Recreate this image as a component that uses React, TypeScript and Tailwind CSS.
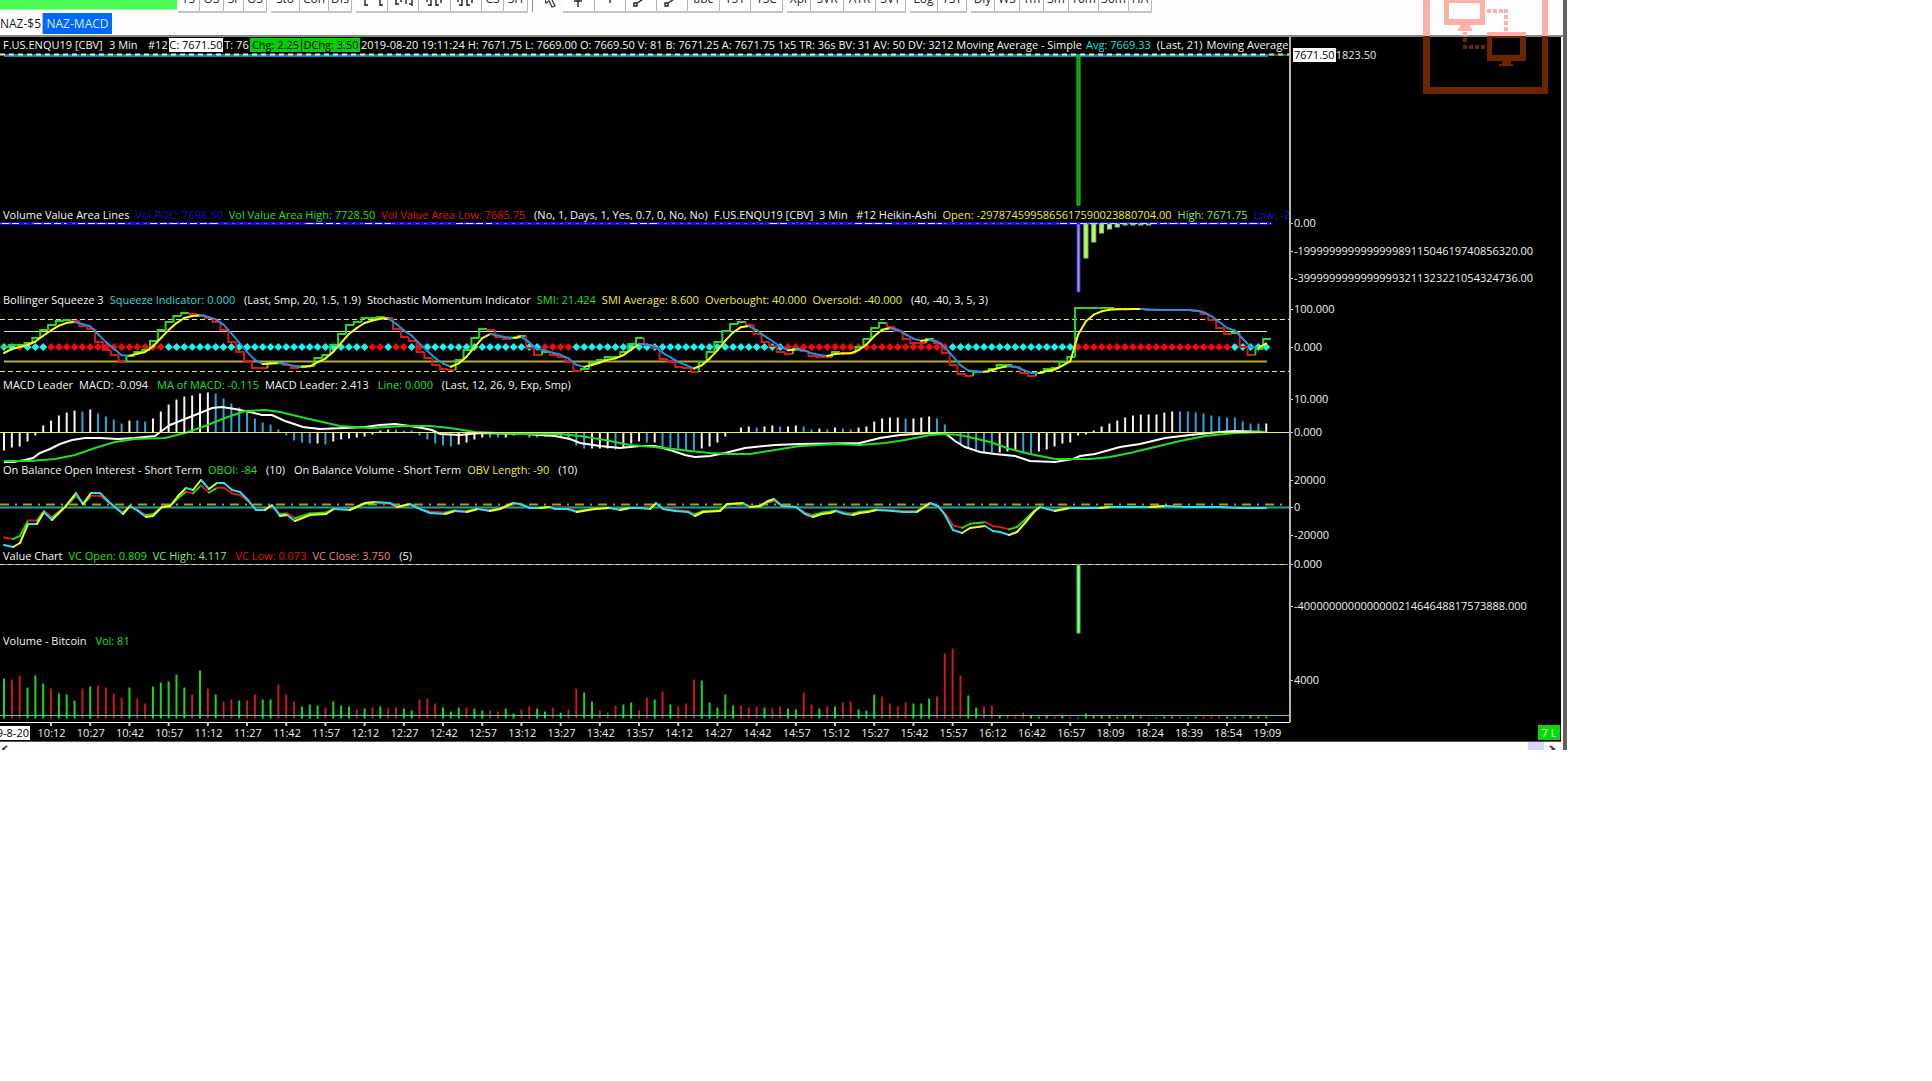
import type { ReactNode } from "react";

type Part = readonly [text: string, tone: string];

const WHITE = "text-neutral-100";
const GREEN = "text-[#22e022]";
const YELLOW = "text-[#eeee30]";

function barX(index: number) {
  return 4 + index * 7.84;
}

/* "g40" is an up bar 40 tall, "r39" a down bar */
const VOLUME =
  "g40 r39 r43 g31 g43 g35 r30 g25 g24 g18 r30 g32 r33 r31 r25 r21 g31 r20 r15 g32 g36 g37 g44 g31 r24 g48 r30 g24 r17 r19 g18 r18 r24 g19 g19 r34 r24 r17 g12 g14 g13 r11 g17 g13 g12 r9 g10 r11 g12 r10 r11 g10 g8 r19 r20 r15 g11 g7 g11 r11 g10 g8 r8 r7 g10 g5 r9 r12 g10 g7 r11 g6 r9 r30 g26 g17 r8 r6 r13 g14 g16 r8 r21 g19 r27 g14 r12 r15 r39 g38 g16 g11 g24 g13 r13 r11 r12 g11 r10 r12 g10 g9 r26 r14 g10 r12 g12 r16 r17 g9 g8 g24 r22 r15 r12 r16 g15 g15 g20 r22 r65 r70 r43 g23 g11 r12 r13 g3 r3 r2 r6 g3 g2 g3 r2 g3 r2 g1 g5 g3 g3 g3 g2 g3 g3 g2 r1 g1 g2 g2 r2 g1 g2 r2 r2 r2 g2 g2 r4 g3 g2 g2".split(" ");

/* "w" bars are rising, "b" bars are fading */
const MACD_BARS =
  "w-18 w-15 w-14 w-9 w-3 w7 w12 w17 w20 w22 b21 w23 b19 b16 b13 b9 w12 b12 b11 w14 w21 w28 w33 w36 w37 w39 w40 b39 b34 b29 b25 b20 b14 b10 b8 b3 b-3 b-8 b-10 b-11 w-11 b-12 w-9 w-7 w-6 w-5 w-4 w-2 w2 w3 b3 b2 b2 b-3 b-7 b-11 b-13 b-14 w-12 w-10 w-7 w-5 b-5 b-5 w-5 w-3 b-2 b-5 b-5 w-4 b-4 b-5 b-7 b-13 b-16 w-16 w-16 w-16 b-17 w-15 w-11 w-9 b-10 w-10 b-15 b-15 b-17 b-18 b-18 w-16 w-14 w-10 w-4 w0 w5 w6 b5 w6 w7 b6 w6 w7 b6 b3 w4 b3 w5 b4 b3 w5 w6 w11 w14 w15 w15 b14 w14 w15 w16 b14 b8 b-1 b-12 b-16 b-18 b-20 b-20 w-20 w-19 w-18 b-21 b-21 w-19 w-17 w-14 w-11 w-10 w-3 w-2 w2 w6 w9 w12 w15 w17 w18 w18 w18 w20 w21 b21 b21 b20 b19 b17 b16 b15 b15 b11 b9 b9 w9".split(" ");

const SMI = [
  347, 345, 345, 343, 338, 330, 325, 321, 320, 321, 326, 329, 342, 350, 355, 362, 356, 352, 350, 341,
  330, 322, 316, 313, 314, 315, 318, 322, 330, 342, 352, 361, 368, 368, 363, 363, 365, 368, 367, 366,
  358, 355, 345, 334, 325, 322, 318, 318, 317, 318, 329, 337, 341, 352, 358, 365, 369, 370, 360, 350,
  338, 329, 330, 337, 339, 338, 336, 348, 355, 352, 355, 357, 362, 371, 369, 363, 360, 357, 357, 352,
  344, 338, 345, 348, 359, 362, 367, 368, 372, 362, 352, 342, 331, 324, 322, 325, 334, 342, 346, 352,
  354, 349, 351, 356, 357, 357, 352, 353, 353, 347, 339, 328, 323, 327, 331, 339, 343, 343, 339, 343,
  353, 365, 374, 376, 372, 372, 369, 365, 365, 367, 373, 376, 373, 369, 368, 362, 357, 308, 308, 308,
  308, 308, 309, 309, 309, 309, 310, 310, 310, 310, 310, 310, 311, 314, 320, 328, 334, 333, 347, 355,
  349, 339,
];

const MACD_LINE =
  "4,462 13,462 25,460 33,458 40,453 50,449 60,444 72,440 85,438 100,438 118,439 135,438 155,436 163,430 170,425 185,419 200,413 212,408 222,407 235,409 250,412 262,415 272,415 285,421 303,427 320,429 345,428 365,427 380,425 395,424 410,426 422,428 432,430 440,434 460,435 480,433 525,434 555,436 570,439 580,443 600,446 620,448 640,446 655,446 670,450 685,455 695,457 710,456 725,453 745,448 775,445 800,444 860,443 880,438 900,435 930,433 945,433 955,441 965,447 980,452 995,454 1015,456 1030,461 1055,462 1073,459 1080,456 1095,454 1120,447 1140,444 1165,438 1190,435 1220,432 1235,431 1266,432";

const MACD_AVERAGE =
  "4,461 30,461 55,459 75,455 95,448 115,442 135,439 165,438 185,433 205,426 225,418 245,411 265,410 280,412 305,418 340,426 370,428 405,426 430,426 450,428 475,432 520,434 560,434 580,436 605,440 630,445 665,448 690,451 710,453 730,454 750,454 775,450 800,446 835,444 860,445 885,443 905,440 930,435 945,434 960,435 990,442 1010,449 1030,454 1055,459 1090,459 1110,457 1130,453 1155,447 1180,441 1205,436 1235,433 1266,432";

const OBV: number[][] =
  "4,545 13,547 20,543 28,524 37,524 44,512 52,520 65,507 76,493 83,504 91,493 100,493 108,501 116,508 123,514 130,506 138,511 146,517 153,516 162,507 170,506 178,496 186,488 193,490 201,480 209,489 217,483 224,483 232,490 240,492 248,500 256,510 265,510 272,505 280,516 287,515 295,521 310,515 326,514 334,509 350,510 365,503 375,502 390,503 397,507 410,504 420,509 430,513 445,514 455,511 467,512 478,509 490,511 500,509 513,503 520,504 530,508 540,508 550,507 555,509 568,509 577,512 595,509 610,508 620,510 630,508 640,508 650,509 656,503 663,509 675,511 688,512 695,516 703,512 720,511 727,504 743,503 750,507 760,506 768,501 774,499 782,506 796,507 805,514 813,517 822,514 830,513 836,511 845,514 853,515 860,513 868,512 877,510 893,511 903,512 917,512 930,503 938,506 945,515 953,530 962,533 970,528 985,526 993,531 1000,532 1009,535 1017,532 1025,523 1034,512 1040,507 1055,511 1070,508 1100,508 1110,507 1150,507 1165,506 1185,507 1220,507 1240,508 1266,508"
    .split(" ")
    .map((point) => point.split(",").map(Number));

const OBOI = OBV.map(([x, y]) => [x, 507 + (y - 507) * 0.8]);

const TIME_LABELS =
  "10:12 10:27 10:42 10:57 11:12 11:27 11:42 11:57 12:12 12:27 12:42 12:57 13:12 13:27 13:42 13:57 14:12 14:27 14:42 14:57 15:12 15:27 15:42 15:57 16:12 16:42 16:57 18:09 18:24 18:39 18:54 19:09".split(" ");

/* ---------- toolbar ---------- */

function PriceBars({ d }: { readonly d: string }) {
  return (
    <svg className="h-[13px] w-8 shrink-0" viewBox="0 0 32 13" fill="none" stroke="#222" strokeWidth="1.4">
      <path d={d} />
    </svg>
  );
}

const BARS_A = "M9 0V6 M9 5H12 M24 0V6 M24 5H27";
const BARS_B = "M9 0V5 M9 4H12 M14 0V2 M19 0V4 M25 0V6 M22 4H25";
const BARS_C = "M8 0V2 M12 0V6 M9 5H12 M17 0V6 M17 5H20 M22 0V3";
const CROSS = "M15 0V7 M11 1H19";
const DASH = "M16 0V3";
const LINE_TOOL = "M12 3H9V6H12Z M12 3L17 0";

type Tool = readonly [width: string, label: string, icon?: string];

const TOOL_GROUPS: readonly (readonly Tool[])[] = [
  [["w-[22px]", "YS"], ["w-6", "OS"], ["w-5", "Sr"], ["w-[23px]", "OS"]],
  [["w-[29px]", "Sto"], ["w-[29px]", "Con"], ["w-[23px]", "DIs"]],
  [["w-8", "", BARS_A], ["w-[31px]", "", BARS_B], ["w-8", "", BARS_C], ["w-[31px]", "", BARS_C], ["w-[22px]", "CS"], ["w-6", "SH"]],
];

const DRAW_GROUPS: readonly (readonly Tool[])[] = [
  [["w-8", "", CROSS], ["w-[31px]", "", DASH], ["w-[31px]", "", LINE_TOOL], ["w-[31px]", "", LINE_TOOL], ["w-8", "abc"], ["w-[31px]", "T5T"], ["w-8", "TSC"]],
  [["w-6", "Xpl"], ["w-[33px]", "SVR"], ["w-8", "ATR"], ["w-[30px]", "SVT"]],
  [["w-7", "Log"], ["w-[29px]", "YST"]],
  [["w-6", "Dly"], ["w-[25px]", "WS"], ["w-6", "1m"], ["w-[25px]", "3m"], ["w-[30px]", "10m"], ["w-[30px]", "30m"], ["w-[23px]", "HA"]],
];

function ToolGroup({ tools }: { readonly tools: readonly Tool[] }) {
  return (
    <div className="flex h-[13px] shrink-0 border-b-2 border-[#c6c4be]">
      {tools.map(([width, label, icon], index) => (
        <button
          key={index}
          type="button"
          className={`${width} flex h-[11px] shrink-0 items-end justify-center border-r border-[#b8b6b0] bg-white pb-[6px] text-xs leading-none text-neutral-800`}
        >
          {icon ? <span className="-mb-2 flex"><PriceBars d={icon} /></span> : label}
        </button>
      ))}
    </div>
  );
}

function Toolbar() {
  return (
    <div className="flex h-[13px] gap-1 overflow-hidden">
      <div className="-mr-[3px] h-[10px] w-[177px] shrink-0 border-b border-[#9dff9d] bg-[#4cfc55]" />
      {TOOL_GROUPS.map((tools, index) => (
        <ToolGroup key={index} tools={tools} />
      ))}
      <button type="button" aria-label="Select" className="-mr-1 flex h-3 w-[31px] shrink-0 border-l border-[#8f8d88] pl-3">
        <svg className="h-[9px] w-3" viewBox="0 0 12 9" fill="white" stroke="#333" strokeWidth="1.2">
          <path d="M0 0L1 3L4 1L7 7L10 6L7 0" />
        </svg>
      </button>
      {DRAW_GROUPS.map((tools, index) => (
        <ToolGroup key={index} tools={tools} />
      ))}
    </div>
  );
}

function Tabs() {
  return (
    <div className="flex h-6 items-start border-b-2 border-[#8b8a82] text-xs leading-[21px]">
      <button type="button" className="h-[21px] w-[43px] border-r border-[#b8b6b0] bg-white text-left whitespace-nowrap text-neutral-900">
        NAZ-$5
      </button>
      <button type="button" className="h-[21px] w-[69px] bg-[#0067f8] whitespace-nowrap text-[#d9ecff]">
        NAZ-MACD
      </button>
    </div>
  );
}

/* ---------- panes ---------- */

function Legend({ parts }: { readonly parts: readonly Part[] }) {
  return (
    <div className="flex h-4 items-center gap-[6px] overflow-hidden pl-[3px] whitespace-pre">
      {parts.map(([text, tone], index) => (
        <span key={index} className={`${tone} shrink-0`}>
          {text}
        </span>
      ))}
    </div>
  );
}

function Pane({
  top,
  height,
  size,
  legend,
  ticks,
  children,
}: {
  readonly top: number;
  readonly height: number;
  readonly size: string;
  readonly legend: ReactNode;
  readonly ticks: readonly (readonly [number, string])[];
  readonly children: ReactNode;
}) {
  return (
    <section className={`${size} flex`}>
      <div className="flex min-w-0 flex-1 flex-col">
        {legend}
        <svg
          className="block w-full flex-1 overflow-visible"
          viewBox={`0 ${top + 16} 1289 ${height - 16}`}
          preserveAspectRatio="none"
          fill="none"
        >
          {children}
        </svg>
      </div>
      <svg className="block h-full w-[272px] shrink-0 border-l-2 border-[#b5b5b5]" viewBox={`0 ${top} 270 ${height}`}>
        {ticks.map(([y, label]) => (
          <g key={label}>
            <path d={`M0 ${y}H2`} stroke="#d4d4d4" />
            <text x="3" y={y + 3.5} fill="#f0f0f0">
              {label}
            </text>
          </g>
        ))}
      </svg>
    </section>
  );
}

function TrendLine({
  points,
  up,
  down,
}: {
  readonly points: readonly (readonly number[])[];
  readonly up: string;
  readonly down: string;
}) {
  return (
    <g strokeWidth="2" strokeLinecap="round">
      {points.slice(1).map(([x, y], index) => {
        const [px, py] = points[index];
        return <path key={index} d={`M${px} ${py}L${x} ${y}`} stroke={y < py ? up : down} />;
      })}
    </g>
  );
}

function squeezeTone(index: number) {
  const squeezed =
    index === 2 ||
    (index >= 6 && index <= 20) ||
    [47, 48, 50, 51, 53].includes(index) ||
    (index >= 69 && index <= 72) ||
    (index >= 100 && index <= 120) ||
    (index >= 137 && index <= 156);
  return squeezed ? "#f40808" : "#18f4f4";
}

function SmiPlot() {
  let average = 353;
  const averages = SMI.map((level, index) => {
    average = index === 0 ? average : average + (level - average) / 2;
    return [barX(index), average];
  });
  let stepTone = "#35d635";

  return (
    <>
      <path d="M0 319.5H1290M0 371.5H1290" stroke="#e8e85a" strokeDasharray="5 3" />
      <path d="M4 331.5H1267" stroke="#eded55" />
      <path d="M4 361.5H1267" stroke="#b5aa35" strokeWidth="2" />
      {SMI.map((_, index) => {
        const x = barX(index);
        return <path key={index} d={`M${x - 4} 347L${x} 343L${x + 4} 347L${x} 351Z`} fill={squeezeTone(index)} />;
      })}
      {SMI.map((level, index) => {
        const previous = SMI[Math.max(0, index - 1)];
        if (level < previous) stepTone = "#27d827";
        if (level > previous) stepTone = "#dc1818";
        const x = barX(index) - 3;
        return <path key={index} d={`M${x} ${previous}V${level}H${x + 7.84}`} stroke={stepTone} strokeWidth="2" />;
      })}
      <TrendLine points={averages} up="#fcfc1c" down="#2490e6" />
    </>
  );
}

function TimeAxis() {
  return (
    <div className="flex h-[19px] bg-black">
      <div className="flex min-w-0 flex-1 flex-col">
        <svg className="block h-1 w-full" viewBox="0 0 1290 4" preserveAspectRatio="none">
          <path d="M0 0H1290" stroke="white" strokeWidth="2" />
          {TIME_LABELS.map((time, index) => (
            <path key={time} d={`M${barX(6 + index * 5)} 0V4`} stroke="#d4d4d4" strokeWidth="2" />
          ))}
        </svg>
        <div className="flex h-[14px] items-center text-[#f0f0f0]">
          <span className="mr-[2px] flex h-[14px] w-[30px] shrink-0 items-center justify-end overflow-hidden bg-white pr-px whitespace-nowrap text-black">
            9-8-20
          </span>
          <div className="mr-[3px] flex min-w-0 flex-1">
            {TIME_LABELS.map((time) => (
              <span key={time} className="min-w-0 flex-1 text-center">
                {time}
              </span>
            ))}
          </div>
        </div>
      </div>
      <div className="flex w-[271px] shrink-0 items-end justify-end pr-px pb-px">
        <span className="h-[15px] w-[22px] bg-[#04d904] text-center leading-[15px] text-[#d5ffd5]">7 L</span>
      </div>
    </div>
  );
}

function RemoteLogo() {
  const dots = [
    [64, 9], [70, 9], [76, 9], [81, 9], [81, 15], [81, 21], [81, 27],
    [40, 32], [40, 38], [40, 45], [46, 45], [52, 45], [58, 45],
  ];
  return (
    <svg className="absolute top-0 right-[15px] h-[94px] w-[125px]" viewBox="0 0 125 94">
      <defs>
        <linearGradient id="logo-tone" gradientUnits="userSpaceOnUse" x1="0" y1="0" x2="0" y2="94">
          <stop offset="0.388" stopColor="#fbb1a8" />
          <stop offset="0.388" stopColor="#6d2500" />
        </linearGradient>
      </defs>
      <g fill="url(#logo-tone)" fillRule="evenodd">
        <path d="M0 0H7V87H119V0H125V94H0Z" />
        <path d="M21 0H62V25H47V28H49V31H35V28H37V25H21Z M26 3V19H57V3Z" />
        <path d="M64 32H103V61H88V64H90V66H76V64H79V61H64Z M69 38V55H97V38Z" />
        {dots.map(([x, y]) => (
          <rect key={`${x}-${y}`} x={x} y={y} width="4" height="4" />
        ))}
      </g>
    </svg>
  );
}

export default function App() {
  return (
    <main className="min-h-screen bg-white font-['Open_Sans',sans-serif] text-[11px] leading-[14px]">
      <div className="relative w-[calc(100%-365px)] overflow-hidden border-r-4 border-[#606264] bg-[#fdfcff]">
        <Toolbar />
        <Tabs />

        <div className="mr-[2px] bg-black">
          <div className="flex h-[170px]">
            <div className="flex min-w-0 flex-1 flex-col">
              <div className="flex h-4 items-center overflow-hidden pl-[3px] whitespace-pre text-neutral-100">
                <span className="w-[106px] shrink-0">F.US.ENQU19 [CBV]</span>
                <span className="w-[39px] shrink-0">3 Min</span>
                <span className="w-[21px] shrink-0">#12</span>
                <span className="w-[54px] shrink-0 bg-white text-center text-black">C: 7671.50</span>
                <span className="w-[27px] shrink-0 text-center">T: 76</span>
                <span className="mr-px w-[51px] shrink-0 bg-[#04cf04] text-center text-black">Chg: 2.25</span>
                <span className="mr-px w-[58px] shrink-0 bg-[#04cf04] text-center text-black">DChg: 3.50</span>
                <span className="shrink-0">
                  2019-08-20 19:11:24 H: 7671.75 L: 7669.00 O: 7669.50 V: 81 B: 7671.25 A: 7671.75 1x5 TR: 36s BV: 31 AV: 50 DV: 3212 Moving Average - Simple
                </span>
                <span className="ml-1 shrink-0 text-[#22dede]">Avg: 7669.33</span>
                <span className="ml-[6px] shrink-0">(Last, 21)</span>
                <span className="ml-1 shrink-0">Moving Average</span>
              </div>
              <svg className="block w-full flex-1" viewBox="0 53 1289 154" preserveAspectRatio="none" fill="none">
                <path d="M4 55.5H1268" stroke="#1583c6" strokeWidth="3" />
                <path d="M0 54.5H1289" stroke="#f2f29a" strokeWidth="2" strokeDasharray="5 4" />
                <path d="M1268 55H1289" stroke="#5fd08c" />
                <rect x="1077" y="56" width="3" height="149" fill="#068f06" stroke="#1be01b" />
              </svg>
            </div>
            <div className="w-[272px] shrink-0 border-l-2 border-[#b5b5b5] pt-[11px] pl-[2px] text-[#e5e5e5]">
              <span className="inline-block bg-white px-px text-black">7671.50</span>
              <span>1823.50</span>
            </div>
          </div>

          <Pane
            top={207}
            height={85}
            size="h-[85px]"
            ticks={[
              [223.5, "0.00"],
              [251.5, "-19999999999999998911504619740856320.00"],
              [278.5, "-39999999999999993211323221054324736.00"],
            ]}
            legend={
              <Legend
                parts={[
                  ["Volume Value Area Lines", WHITE],
                  ["Vol POC: 7698.50", "text-[#1010c8]"],
                  ["Vol Value Area High: 7728.50", GREEN],
                  ["Vol Value Area Low: 7685.75", "text-[#e01414]"],
                  [" (No, 1, Days, 1, Yes, 0.7, 0, No, No)", WHITE],
                  ["F.US.ENQU19 [CBV]  3 Min   #12 Heikin-Ashi", WHITE],
                  ["Open: -2978745995865617590023880704.00", YELLOW],
                  ["High: 7671.75", "text-[#7fe87f]"],
                  ["Low: -29", "text-[#1414d8]"],
                ]}
              />
            }
          >
            <path d="M0 223.5H1271" stroke="#1010dc" strokeWidth="3" />
            <path d="M0 223.5H1271" stroke="#b03cb8" strokeDasharray="3 5" />
            <path d="M2 223.5H20M34 223.5H66M78 223.5H125M150 223.5H218M306 223.5H340M365 223.5H391M456 223.5H492M630 223.5H660M770 223.5H790M855 223.5H895M918 223.5H942M1060 223.5H1271" stroke="#efeaff" strokeDasharray="7 3" />
            <rect x="1077" y="224" width="3" height="68" fill="#9a9af0" stroke="#3030c8" />
            <g fill="#b4f76c" stroke="#8fd04f" strokeWidth="1">
              {[34, 18, 9, 5, 3, 1, 1, 1, 1].map((drop, index) => (
                <rect key={index} x={barX(138 + index) - 2} y="224" width="4" height={drop} />
              ))}
            </g>
          </Pane>

          <Pane
            top={292}
            height={85}
            size="h-[85px]"
            ticks={[[309.5, "100.000"], [347.5, "0.000"]]}
            legend={
              <Legend
                parts={[
                  ["Bollinger Squeeze 3", WHITE],
                  ["Squeeze Indicator: 0.000", "text-[#22dede]"],
                  [" (Last, Smp, 20, 1.5, 1.9)", WHITE],
                  ["Stochastic Momentum Indicator", WHITE],
                  ["SMI: 21.424", GREEN],
                  ["SMI Average: 8.600", YELLOW],
                  ["Overbought: 40.000", YELLOW],
                  ["Oversold: -40.000", YELLOW],
                  [" (40, -40, 3, 5, 3)", WHITE],
                ]}
              />
            }
          >
            <SmiPlot />
          </Pane>

          <Pane
            top={377}
            height={85}
            size="h-[85px]"
            ticks={[[399.5, "10.000"], [432.5, "0.000"]]}
            legend={
              <Legend
                parts={[
                  ["MACD Leader", WHITE],
                  ["MACD: -0.094", WHITE],
                  [" MA of MACD: -0.115", GREEN],
                  ["MACD Leader: 2.413", WHITE],
                  [" Line: 0.000", GREEN],
                  [" (Last, 12, 26, 9, Exp, Smp)", WHITE],
                ]}
              />
            }
          >
            {MACD_BARS.map((bar, index) => (
              <path
                key={index}
                d={`M${barX(index)} 432.5v${-Number(bar.slice(1))}`}
                stroke={bar[0] === "w" ? "#f5f5f5" : "#2fa4e0"}
                strokeWidth="2"
              />
            ))}
            <polyline points={MACD_LINE} stroke="white" strokeWidth="2" />
            <polyline points={MACD_AVERAGE} stroke="#1fe01f" strokeWidth="2" />
            <path d="M0 432.5H1290" stroke="#efef5a" />
          </Pane>

          <Pane
            top={462}
            height={86}
            size="h-[86px]"
            ticks={[[480.5, "20000"], [507.5, "0"], [535.5, "-20000"]]}
            legend={
              <Legend
                parts={[
                  ["On Balance Open Interest - Short Term", WHITE],
                  ["OBOI: -84", GREEN],
                  [" (10)", WHITE],
                  [" On Balance Volume - Short Term", WHITE],
                  ["OBV Length: -90", YELLOW],
                  [" (10)", WHITE],
                ]}
              />
            }
          >
            <path d="M0 504.5H1287" stroke="#a8a00c" strokeWidth="2" strokeDasharray="9 6 2 6" />
            <path d="M0 507.5H1289" stroke="#2f9aa0" strokeWidth="2" />
            <TrendLine points={OBOI} up="#17e017" down="#e01717" />
            <TrendLine points={OBV} up="#f7f72a" down="#20e4f0" />
          </Pane>

          <Pane
            top={548}
            height={85}
            size="h-[85px]"
            ticks={[[564.5, "0.000"], [606.5, "-4000000000000000214646488175" + "73888.000"]]}
            legend={
              <Legend
                parts={[
                  ["Value Chart", WHITE],
                  ["VC Open: 0.809", GREEN],
                  ["VC High: 4.117", "text-[#7fe87f]"],
                  [" VC Low: 0.073", "text-[#e01414]"],
                  ["VC Close: 3.750", "text-[#f08080]"],
                  [" (5)", WHITE],
                ]}
              />
            }
          >
            <path d="M0 564.5H1288" stroke="#3fb8a8" />
            <path d="M0 564.5H1288" stroke="#e6e65a" strokeDasharray="4 4" />
            <rect x="1077" y="565" width="3" height="68" fill="#93ff9b" stroke="#2fd13c" />
          </Pane>

          <Pane
            top={633}
            height={89}
            size="h-[89px]"
            ticks={[[680.5, "4000"]]}
            legend={<Legend parts={[["Volume - Bitcoin", WHITE], [" Vol: 81", GREEN]]} />}
          >
            {VOLUME.map((bar, index) => (
              <path
                key={index}
                d={`M${barX(index)} 718.5v${-Number(bar.slice(1))}`}
                stroke={bar[0] === "g" ? "#1fd41f" : "#c81a1a"}
                strokeWidth="2"
              />
            ))}
            <path d="M0 715.5H1289" stroke="#3fd0d4" />
          </Pane>

          <TimeAxis />
        </div>

        <div className="mr-[2px] flex h-[9px] items-start overflow-hidden border-t border-[#555] pl-px">
          <button type="button" aria-label="Scroll left" className="h-2 w-4">
            <svg className="h-2 w-2" viewBox="0 0 8 8" fill="none" stroke="#444" strokeWidth="2">
              <path d="M6 4L2 7L4 9" />
            </svg>
          </button>
          <div className="ml-auto h-2 w-4 bg-[#d5d5fc]" />
          <button type="button" aria-label="Scroll right" className="h-2 w-[17px] pl-1">
            <svg className="h-2 w-2" viewBox="0 0 8 8" fill="none" stroke="#444" strokeWidth="2">
              <path d="M2 4L6 7L3 9" />
            </svg>
          </button>
        </div>
        <RemoteLogo />
      </div>
    </main>
  );
}
